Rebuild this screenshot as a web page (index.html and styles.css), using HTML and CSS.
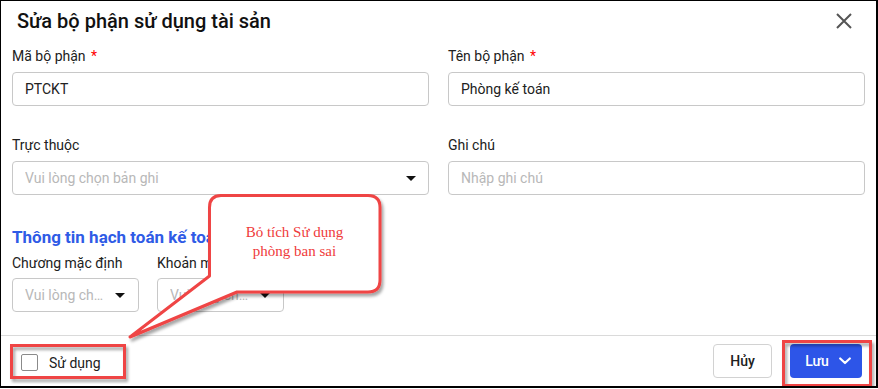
FILE: index.html
```html
<!DOCTYPE html>
<html lang="vi">
<head>
<meta charset="utf-8">
<title>Sửa bộ phận sử dụng tài sản</title>
<link rel="stylesheet" href="styles.css">
</head>
<body>
<div class="frame">
  <header class="dlg-head">
    <h1 class="dlg-title">Sửa bộ phận sử dụng tài sản</h1>
    <button class="close-btn" aria-label="Đóng">
      <svg width="16" height="16" viewBox="0 0 16 16"><path d="M1 1 L15 15 M15 1 L1 15" stroke="#555" stroke-width="2" fill="none"/></svg>
    </button>
  </header>
  <main class="dlg-body">
    <div class="grid">
      <div class="field">
        <div class="label">Mã bộ phận <span class="req">*</span></div>
        <div class="input"><span class="val">PTCKT</span></div>
      </div>
      <div class="field">
        <div class="label">Tên bộ phận <span class="req">*</span></div>
        <div class="input"><span class="val">Phòng kế toán</span></div>
      </div>
      <div class="field">
        <div class="label">Trực thuộc</div>
        <div class="input select"><span class="ph">Vui lòng chọn bản ghi</span><span class="caret"></span></div>
      </div>
      <div class="field">
        <div class="label">Ghi chú</div>
        <div class="input"><span class="ph">Nhập ghi chú</span></div>
      </div>
    </div>
    <h2 class="section">Thông tin hạch toán kế toán</h2>
    <div class="small-row">
      <div class="field sm">
        <div class="label">Chương mặc định</div>
        <div class="input select"><span class="ph">Vui lòng chọn bản ghi</span><span class="caret"></span></div>
      </div>
      <div class="field sm">
        <div class="label">Khoản mục chi phí</div>
        <div class="input select"><span class="ph">Vui lòng chọn bản ghi</span><span class="caret"></span></div>
      </div>
    </div>
  </main>
  <footer class="dlg-foot">
    <label class="check"><span class="box"></span><span>Sử dụng</span></label>
    <div class="actions">
      <button class="btn btn-cancel">Hủy</button>
      <button class="btn btn-save">Lưu
        <svg width="12" height="8" viewBox="0 0 12 8"><path d="M1.2 1.5 L6 6 L10.8 1.5" stroke="#fff" stroke-width="2.2" fill="none" stroke-linecap="round" stroke-linejoin="round"/></svg>
      </button>
    </div>
  </footer>

  <svg class="annot" width="878" height="389" viewBox="0 0 878 389">
    <defs>
      <filter id="sh" x="-10%" y="-10%" width="130%" height="130%">
        <feDropShadow dx="2" dy="3" stdDeviation="1.6" flood-color="#000" flood-opacity="0.35"/>
      </filter>
    </defs>
    <path class="callout" filter="url(#sh)" d="M221 195.5 H368 Q380 195.5 380 207.5 V280 Q380 292 368 292 H237 L130 337 L209.5 276 V207.5 Q209.5 195.5 221 195.5 Z"/>
    <rect class="mark" filter="url(#sh)" x="11.5" y="345.5" width="113" height="32"/>
    <rect class="mark" filter="url(#sh)" x="783.5" y="341.5" width="87" height="44"/>
  </svg>
  <div class="callout-text">Bỏ tích Sử dụng<br>phòng ban sai</div>
</div>
</body>
</html>
```

FILE: styles.css
```css
* { box-sizing: border-box; }
html, body { margin: 0; padding: 0; background: #fff; }
body { font-family: Roboto, "Noto Sans", Arial, sans-serif; color: #212121; }

.frame {
  position: relative;
  width: 878px;
  height: 388px;
  border-top: 1px solid #000;
  border-left: 1px solid #000;
  border-right: 2px solid #000;
  border-bottom: 2px solid #000;
  display: flex;
  flex-direction: column;
  background: #fff;
  overflow: hidden;
}

.dlg-head {
  height: 40px;
  flex: none;
  display: flex;
  align-items: center;
  justify-content: space-between;
  padding: 0 24px 0 16px;
}
.dlg-title {
  margin: 0;
  font-size: 20px;
  font-weight: 500;
  color: #111;
  line-height: 40px;
}
.close-btn {
  border: 0;
  background: none;
  padding: 0;
  width: 16px;
  height: 16px;
  display: block;
}
.close-btn svg { display: block; }

.dlg-body {
  flex: 1;
  padding: 5px 11px 0 11px;
}
.grid {
  display: grid;
  grid-template-columns: 417px 417px;
  column-gap: 19px;
  row-gap: 29px;
}
.field { display: flex; flex-direction: column; }
.label {
  font-size: 14px;
  line-height: 20px;
  height: 20px;
  margin-bottom: 6px;
  white-space: nowrap;
  color: #212121;
}
.req { color: #f00; margin-left: 2px; }
.input {
  height: 34px;
  border: 1px solid #c8c8c8;
  border-radius: 4px;
  display: flex;
  align-items: center;
  padding: 0 12px;
  font-size: 14px;
  min-width: 0;
}
.val { color: #212121; }
.ph {
  color: #b8b8b8;
  flex: 1;
  min-width: 0;
  white-space: nowrap;
  overflow: hidden;
  text-overflow: ellipsis;
}
.caret {
  flex: none;
  width: 0;
  height: 0;
  border-left: 5px solid transparent;
  border-right: 5px solid transparent;
  border-top: 5px solid #111;
  margin-left: 8px;
}

.section {
  margin: 31px 0 0 0;
  font-size: 17px;
  line-height: 22px;
  font-weight: 700;
  color: #2f5be6;
  white-space: nowrap;
}
.small-row {
  display: flex;
  gap: 18px;
  margin-top: 5px;
}
.field.sm { width: 127px; }
.field.sm .label { margin-bottom: 5px; overflow: hidden; }
.field.sm .input { padding-right: 13px; }

.dlg-foot {
  flex: none;
  height: 51px;
  border-top: 1px solid #dadada;
  display: flex;
  align-items: center;
  justify-content: space-between;
  padding: 0 14px 0 20px;
}
.check {
  display: flex;
  align-items: center;
  gap: 11px;
  font-size: 14px;
  color: #212121;
  margin-top: 3px;
}
.box {
  width: 17px;
  height: 17px;
  border: 1px solid #8a8a8a;
  border-radius: 2px;
  background: #fff;
}
.actions { display: flex; gap: 18px; }
.btn {
  height: 34px;
  border-radius: 4px;
  font-family: Roboto, Arial, sans-serif;
  font-size: 14px;
  font-weight: 500;
  display: flex;
  align-items: center;
  justify-content: center;
}
.btn-cancel {
  width: 59px;
  background: #fff;
  border: 1px solid #d2d2d2;
  color: #212121;
}
.btn-save {
  width: 72px;
  background: #2d55e8;
  border: 0;
  color: #fff;
  gap: 10px;
  padding: 0 0 0 4px;
}
.btn-save svg { display: block; }

.annot {
  position: absolute;
  left: -1px;
  top: -1px;
  pointer-events: none;
}
.callout { fill: #fff; stroke: #ef4444; stroke-width: 3; stroke-linejoin: round; }
.mark { fill: none; stroke: #ef4444; stroke-width: 3; }
.callout-text {
  position: absolute;
  left: 207px;
  top: 222px;
  width: 173px;
  text-align: center;
  font-family: "Liberation Serif", "Times New Roman", serif;
  font-size: 15px;
  line-height: 19px;
  color: #ef3b3b;
}
```
